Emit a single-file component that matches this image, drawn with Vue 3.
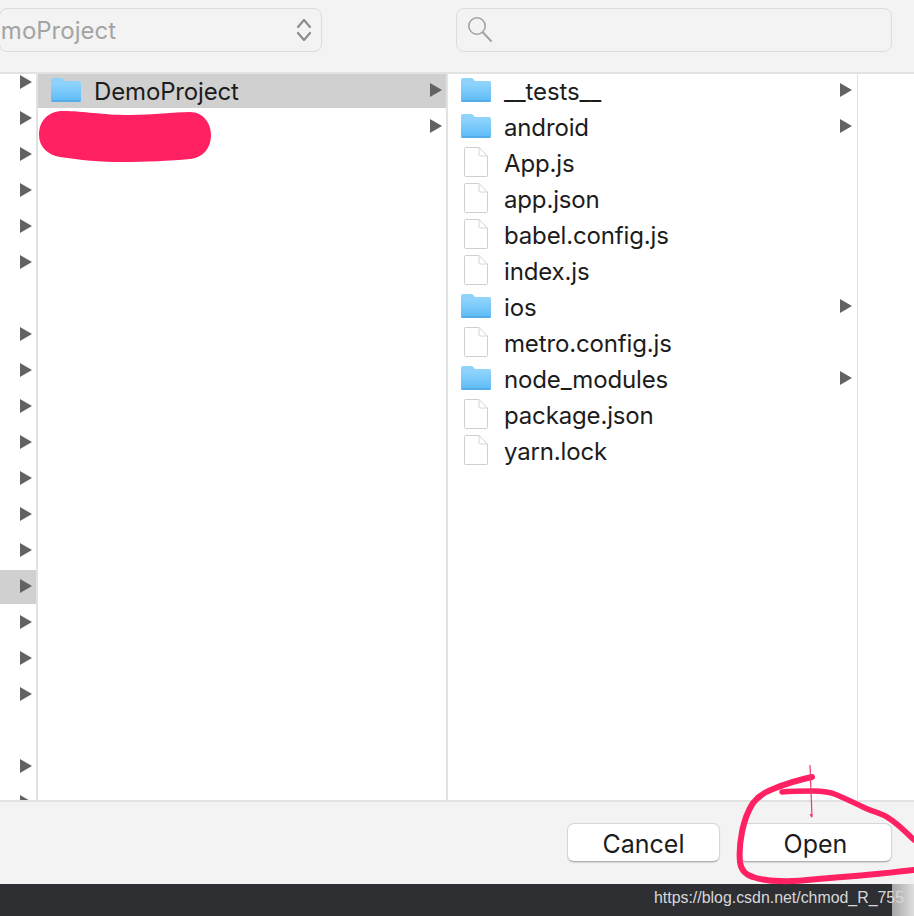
<script setup>
const sideRows = Array.from({ length: 21 }, (_, i) => ({
  id: i,
  arrow: i !== 6 && i !== 18,
  selected: i === 14
}))

const projects = [
  { name: 'DemoProject', folder: true, selected: true },
  { name: '', folder: false, selected: false }
]

const files = [
  { name: '__tests__', folder: true },
  { name: 'android', folder: true },
  { name: 'App.js', folder: false },
  { name: 'app.json', folder: false },
  { name: 'babel.config.js', folder: false },
  { name: 'index.js', folder: false },
  { name: 'ios', folder: true },
  { name: 'metro.config.js', folder: false },
  { name: 'node_modules', folder: true },
  { name: 'package.json', folder: false },
  { name: 'yarn.lock', folder: false }
]
</script>

<template>
  <div class="page">
    <header class="toolbar">
      <div class="picker">
        <span class="picker-text">DemoProject</span>
        <svg class="chevrons" width="16" height="26" viewBox="0 0 16 26">
          <path d="M2 10 L8 3 L14 10 M2 16 L8 23 L14 16" fill="none" stroke="#8c8c8c" stroke-width="2.2" stroke-linecap="round" stroke-linejoin="round" />
        </svg>
      </div>
      <div class="search">
        <svg width="28" height="28" viewBox="0 0 28 28">
          <circle cx="11" cy="10" r="8.2" fill="none" stroke="#a2a2a2" stroke-width="1.6" />
          <path d="M17 16.5 L25 25" fill="none" stroke="#a2a2a2" stroke-width="2" stroke-linecap="round" />
        </svg>
      </div>
    </header>

    <main class="browser">
      <section class="col col-side">
        <div class="side-list">
          <div v-for="r in sideRows" :key="r.id" class="row side-row" :class="{ selected: r.selected }">
            <svg v-if="r.arrow" class="arrow" width="12" height="14" viewBox="0 0 12 14"><path d="M0 0 L12 7 L0 14 Z" /></svg>
          </div>
        </div>
      </section>

      <section class="col col-mid">
        <div v-for="p in projects" :key="p.name" class="row" :class="{ selected: p.selected }">
          <svg v-if="p.folder" class="icon" width="30" height="24" viewBox="0 0 30 24">
            <defs>
              <linearGradient id="fa" x1="0" y1="0" x2="0" y2="1">
                <stop offset="0" stop-color="#8ed4fc" /><stop offset="1" stop-color="#5cbaf8" />
              </linearGradient>
            </defs>
            <path d="M0 2 Q0 0 2 0 H10 Q12 0 13 2 L14 3 H28 Q30 3 30 5 V22 Q30 24 28 24 H2 Q0 24 0 22 Z" fill="#8fd2fa" />
            <path d="M0 5 H30 V22 Q30 24 28 24 H2 Q0 24 0 22 Z" fill="url(#fa)" />
            <path d="M0.5 23 H29.5" stroke="#4b9fd8" stroke-width="1" />
          </svg>
          <span class="name">{{ p.name }}</span>
          <svg class="arrow push" width="12" height="14" viewBox="0 0 12 14"><path d="M0 0 L12 7 L0 14 Z" /></svg>
        </div>
      </section>

      <section class="col col-files">
        <div v-for="f in files" :key="f.name" class="row">
          <svg v-if="f.folder" class="icon" width="30" height="24" viewBox="0 0 30 24">
            <defs>
              <linearGradient id="fb" x1="0" y1="0" x2="0" y2="1">
                <stop offset="0" stop-color="#8ed4fc" /><stop offset="1" stop-color="#5cbaf8" />
              </linearGradient>
            </defs>
            <path d="M0 2 Q0 0 2 0 H10 Q12 0 13 2 L14 3 H28 Q30 3 30 5 V22 Q30 24 28 24 H2 Q0 24 0 22 Z" fill="#8fd2fa" />
            <path d="M0 5 H30 V22 Q30 24 28 24 H2 Q0 24 0 22 Z" fill="url(#fb)" />
            <path d="M0.5 23 H29.5" stroke="#4b9fd8" stroke-width="1" />
          </svg>
          <svg v-else class="icon" width="30" height="30" viewBox="0 0 30 30">
            <path d="M3.5 1.5 Q3.5 0.5 4.5 0.5 H18 L26.5 9 V28.5 Q26.5 29.5 25.5 29.5 H4.5 Q3.5 29.5 3.5 28.5 Z" fill="#fff" stroke="#cfcfcf" stroke-width="1" />
            <path d="M18 0.5 V8 Q18 9 19 9 H26.5" fill="none" stroke="#d6d6d6" stroke-width="1" />
          </svg>
          <span class="name">{{ f.name }}</span>
          <svg v-if="f.folder" class="arrow push" width="12" height="14" viewBox="0 0 12 14"><path d="M0 0 L12 7 L0 14 Z" /></svg>
        </div>
      </section>

      <section class="col-rest"></section>
    </main>

    <footer class="actions">
      <button class="btn" type="button">Cancel</button>
      <button class="btn" type="button">Open</button>
    </footer>

    <div class="strip">
      <div class="strip-fade"></div>
      <span class="mark">https://blog.csdn.net/chmod_R_755</span>
    </div>

    <svg class="ink" width="914" height="916" viewBox="0 0 914 916">
      <path d="M63 111 C85 111 100 115 130 115 C155 115 172 112 190 112 C203 112 211 123 211 135 C211 149 202 158 190 159 C170 161 145 162 123 162 C100 162 80 160 60 157 C48 155 39 147 39 135 C39 121 48 111 63 111 Z" fill="#ff2162" />
      <path d="M812 777 C798 780 785 784 773 789 C762 793 757 798 753 803 C747 812 744 822 742 832 C740 842 739 852 740 862 C741 870 746 875 753 877 C762 880 770 881 780 881 C798 882 815 879 830 878 C860 876 888 873 914 870" fill="none" stroke="#ff2162" stroke-width="6" stroke-linecap="round" stroke-linejoin="round" />
      <path d="M782 792 C792 791 803 791 813 791 C822 791 830 792 837 795 C846 799 855 803 863 807 C871 811 880 813 887 817 C897 823 906 832 914 840" fill="none" stroke="#ff2162" stroke-width="5.5" stroke-linecap="round" stroke-linejoin="round" />
      <path d="M810 765 L812 817" fill="none" stroke="#f0386f" stroke-width="1.2" />
      <path d="M809.5 814 L812.5 814 L811.5 818 Z" fill="#f0386f" />
    </svg>
  </div>
</template>

<style>
html, body {
  margin: 0;
  background: #fff;
}
</style>

<style scoped>
.page {
  position: relative;
  width: 914px;
  height: 916px;
  overflow: hidden;
  display: flex;
  flex-direction: column;
  font-family: Inter, "Liberation Sans", sans-serif;
  color: #1c1c1c;
}

.toolbar {
  height: 74px;
  flex: none;
  box-sizing: border-box;
  background: #f3f3f3;
  border-bottom: 2px solid #e2e2e2;
  display: flex;
  align-items: flex-start;
  padding: 8px 22px 0 0;
  gap: 134px;
}

.picker {
  width: 323px;
  margin-left: -1px;
  height: 44px;
  box-sizing: border-box;
  border: 1.5px solid #dcdcdc;
  border-radius: 8px;
  display: flex;
  align-items: center;
  justify-content: flex-end;
  overflow: hidden;
  position: relative;
}

.picker-text {
  position: absolute;
  right: 205px;
  white-space: nowrap;
  font-size: 24px;
  color: #a4a4a4;
}

.chevrons {
  margin-right: 9px;
}

.search {
  flex: 1;
  height: 44px;
  box-sizing: border-box;
  border: 1.5px solid #dcdcdc;
  border-radius: 8px;
  display: flex;
  align-items: center;
  padding-left: 9px;
}

.browser {
  height: 726px;
  flex: none;
  display: flex;
  background: #fff;
  overflow: hidden;
}

.col {
  box-sizing: border-box;
  overflow: hidden;
  border-right: 2px solid #e2e2e2;
  flex: none;
}

.col-side { width: 38px; }
.col-mid { width: 410px; }
.col-files { width: 410px; border-right-width: 1px; }
.col-rest { flex: 1; }

.side-list {
  margin-top: -8px;
}

.row {
  height: 36px;
  box-sizing: border-box;
  display: flex;
  align-items: center;
  padding: 0 4px 0 13px;
  border-bottom: 2px solid transparent;
  background-clip: padding-box;
}

.col-files .row {
  padding-right: 5px;
}

.row.selected {
  background-color: #d0d0d0;
}

.side-row {
  padding: 0 0 0 20px;
}

.arrow {
  flex: none;
  fill: #636363;
  margin-top: -2px;
}

.push {
  margin-left: auto;
}

.icon {
  flex: none;
  margin-top: -2px;
}

.name {
  margin-left: 13px;
  padding-top: 2px;
  font-size: 24px;
  line-height: 34px;
  letter-spacing: -0.15px;
  white-space: nowrap;
}

.actions {
  height: 84px;
  flex: none;
  box-sizing: border-box;
  background: #f3f3f3;
  border-top: 2px solid #e2e2e2;
  display: flex;
  justify-content: flex-end;
  align-items: flex-start;
  gap: 19px;
  padding: 21px 22px 0 0;
}

.btn {
  width: 153px;
  height: 39px;
  padding: 2px 0 0;
  background: #fff;
  border: 1px solid #d6d6d6;
  border-bottom-color: #b0b0b0;
  border-radius: 7px;
  box-shadow: 0 1px 1px rgba(0, 0, 0, 0.12);
  font-family: inherit;
  font-size: 25px;
  color: #1c1c1c;
}

.strip {
  flex: 1;
  background: #2e2f33;
  position: relative;
  display: flex;
  align-items: center;
  justify-content: flex-end;
  padding: 0 10px 4px 0;
}

.strip-fade {
  position: absolute;
  top: 0;
  bottom: 0;
  right: 0;
  width: 22px;
  background: linear-gradient(90deg, #a6a6a6, #dedede);
}

.mark {
  position: relative;
  font-family: "Liberation Sans", Arial, sans-serif;
  font-size: 15.9px;
  color: #d8d8d8;
  white-space: nowrap;
}

.ink {
  position: absolute;
  inset: 0;
  pointer-events: none;
}
</style>
